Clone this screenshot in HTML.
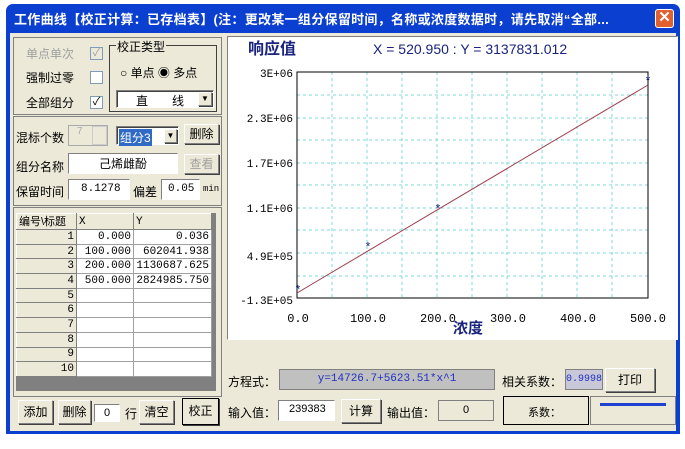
<!DOCTYPE html>
<html><head><meta charset="utf-8"><style>
*{box-sizing:border-box;margin:0;padding:0}
body{width:685px;height:449px;background:#fff;position:relative;overflow:hidden;font-family:"Liberation Sans","Noto Sans CJK SC",sans-serif;font-size:12px;color:#000}
.a{position:absolute}
.win{left:6px;top:4px;width:674px;height:430px;background:#0a3fd0;border-radius:7px 7px 0 0}
.body{left:10px;top:33px;width:666px;height:398px;background:#ece9d8}
.title{left:14px;top:9px;color:#fff;font-weight:bold;font-size:13px;white-space:nowrap;letter-spacing:0.3px}
.btn{background:#ece9d8;border:1px solid;border-color:#fff #808080 #808080 #fff;box-shadow:1px 1px 0 #404040;text-align:center;font-size:12px}
.sunk{background:#fff;border:1px solid;border-color:#808080 #fff #fff #808080;box-shadow:inset 1px 1px 0 #404040}
.chk{width:13px;height:13px;background:#fff;border:1px solid #7f9db9;font-size:11px;line-height:11px;text-align:center}
.lbl{white-space:nowrap}
table{border-collapse:collapse;font-family:"Liberation Mono",monospace;font-size:11px;table-layout:fixed}
td{border:1px solid #a0a0a0;height:14.7px;line-height:12px;padding:0 2px;text-align:right;background:#fff;overflow:hidden;white-space:nowrap}
td.h{background:#ece9d8;border-color:#fff #808080 #808080 #fff}
</style></head><body>
<div class="a win"></div>
<div class="a title">工作曲线【校正计算：已存档表】(注：更改某一组分保留时间，名称或浓度数据时，请先取消“全部...</div>
<div class="a" style="left:655px;top:9px;width:19px;height:19px;background:#e0602f;border:1px solid #fff;border-radius:3px;color:#fff;font-weight:bold;text-align:center;line-height:16px;font-size:15px">✕</div>
<div class="a body"></div>

<div class="a" style="left:13px;top:37px;width:209px;height:78px;border:1px solid #808080"></div>
<div class="a lbl" style="left:26px;top:45px;color:#a0a0a0">单点单次</div>
<div class="a chk" style="left:90px;top:47px;background:#ece9d8;color:#a0a0a0">✓</div>
<div class="a lbl" style="left:26px;top:69px">强制过零</div>
<div class="a chk" style="left:90px;top:71px"></div>
<div class="a lbl" style="left:26px;top:94px">全部组分</div>
<div class="a chk" style="left:90px;top:96px">✓</div>
<div class="a" style="left:109px;top:45px;width:108px;height:67px;border:1px solid #404040"></div>
<div class="a lbl" style="left:116px;top:38px;background:#ece9d8;padding:0 1px">校正类型</div>
<div class="a lbl" style="left:120px;top:64px">○ 单点 ◉ 多点</div>
<div class="a sunk" style="left:116px;top:90px;width:98px;height:18px"></div>
<div class="a lbl" style="left:136px;top:92px">直　　线</div>
<div class="a btn" style="left:198px;top:92px;width:14px;height:14px;font-size:8px;line-height:12px">▼</div>

<div class="a" style="left:13px;top:116px;width:209px;height:90px;border:1px solid #808080"></div>
<div class="a lbl" style="left:16px;top:129px">混标个数</div>
<div class="a" style="left:68px;top:125px;width:40px;height:21px;border:1px solid #aaa;color:#aaa;padding-left:8px;font-size:10px">7</div>
<div class="a" style="left:92px;top:126px;width:15px;height:19px;border:1px solid #ccc"></div>
<div class="a sunk" style="left:116px;top:126px;width:63px;height:19px"></div>
<div class="a" style="left:119px;top:129px;background:#316ac5;color:#fff;padding:0 1px">组分3</div>
<div class="a btn" style="left:164px;top:129px;width:13px;height:14px;font-size:8px;line-height:12px">▼</div>
<div class="a btn" style="left:184px;top:124px;width:35px;height:20px;line-height:18px">删除</div>
<div class="a lbl" style="left:16px;top:158px">组分名称</div>
<div class="a sunk" style="left:68px;top:153px;width:110px;height:21px;box-shadow:none"></div>
<div class="a lbl" style="left:99px;top:155px">己烯雌酚</div>
<div class="a btn" style="left:184px;top:154px;width:35px;height:20px;line-height:18px;color:#a0a0a0">查看</div>
<div class="a lbl" style="left:16px;top:183px">保留时间</div>
<div class="a sunk" style="left:68px;top:179px;width:62px;height:21px;box-shadow:none;font-family:'Liberation Mono',monospace;font-size:11px;padding:3px 0 0 12px">8.1278</div>
<div class="a lbl" style="left:133px;top:183px">偏差</div>
<div class="a sunk" style="left:161px;top:179px;width:39px;height:21px;box-shadow:none;font-family:'Liberation Mono',monospace;font-size:11px;padding:3px 0 0 6px">0.05</div>
<div class="a" style="left:203px;top:184px;font-family:'Liberation Mono',monospace;font-size:9px">min</div>

<div class="a" style="left:13px;top:207px;width:209px;height:190px;border:1px solid #808080"></div>
<div class="a" style="left:16px;top:213px;width:200px;height:178px;background:#808080"></div>
<div class="a" style="left:16px;top:213px">
<table style="width:196px">
<tr><td class="h" style="width:60px;text-align:left;font-family:'Liberation Sans','Noto Sans CJK SC',sans-serif;font-size:11px;height:16px">编号\标题</td><td class="h" style="width:57px;text-align:left">X</td><td class="h" style="text-align:left">Y</td></tr>
<tr><td class="h">1</td><td>0.000</td><td>0.036</td></tr>
<tr><td class="h">2</td><td>100.000</td><td>602041.938</td></tr>
<tr><td class="h">3</td><td>200.000</td><td>1130687.625</td></tr>
<tr><td class="h">4</td><td>500.000</td><td>2824985.750</td></tr>
<tr><td class="h">5</td><td></td><td></td></tr>
<tr><td class="h">6</td><td></td><td></td></tr>
<tr><td class="h">7</td><td></td><td></td></tr>
<tr><td class="h">8</td><td></td><td></td></tr>
<tr><td class="h">9</td><td></td><td></td></tr>
<tr><td class="h">10</td><td></td><td></td></tr>
</table></div>
<div class="a btn" style="left:18px;top:400px;width:35px;height:24px;line-height:22px">添加</div>
<div class="a btn" style="left:58px;top:400px;width:33px;height:24px;line-height:22px">删除</div>
<div class="a sunk" style="left:94px;top:404px;width:26px;height:18px;box-shadow:none;font-size:11px;text-align:center;line-height:16px">0</div>
<div class="a lbl" style="left:125px;top:405px">行</div>
<div class="a btn" style="left:139px;top:400px;width:35px;height:24px;line-height:22px">清空</div>
<div class="a btn" style="left:182px;top:398px;width:37px;height:27px;line-height:25px;border:1px solid #000">校正</div>

<div class="a" style="left:227px;top:36px;width:451px;height:304px;background:#fff;border:1px solid #808080;border-right-color:#fff;border-bottom-color:#fff"></div>
<svg class="a" style="left:228px;top:37px" width="449" height="302">
<g font-family="Liberation Sans, Noto Sans CJK SC, sans-serif">
<text x="20" y="17" font-size="16" font-weight="bold" fill="#1a237e">响应值</text>
<text x="145" y="17" font-size="14" fill="#1a237e">X = 520.950 : Y = 3137831.012</text>
<text x="225" y="296" font-size="15" font-weight="bold" fill="#1a237e">浓度</text>
</g>
<g stroke="#7fd8d8" stroke-dasharray="3,3" stroke-width="1">
<line x1="104" y1="35" x2="104" y2="261"/><line x1="139" y1="35" x2="139" y2="261"/><line x1="174" y1="35" x2="174" y2="261"/><line x1="209" y1="35" x2="209" y2="261"/><line x1="244" y1="35" x2="244" y2="261"/><line x1="279" y1="35" x2="279" y2="261"/><line x1="314" y1="35" x2="314" y2="261"/><line x1="349" y1="35" x2="349" y2="261"/><line x1="384" y1="35" x2="384" y2="261"/>
<line x1="69" y1="58" x2="420" y2="58"/><line x1="69" y1="81" x2="420" y2="81"/><line x1="69" y1="103" x2="420" y2="103"/><line x1="69" y1="126" x2="420" y2="126"/><line x1="69" y1="148" x2="420" y2="148"/><line x1="69" y1="171" x2="420" y2="171"/><line x1="69" y1="193" x2="420" y2="193"/><line x1="69" y1="216" x2="420" y2="216"/><line x1="69" y1="239" x2="420" y2="239"/>
</g>
<rect x="69" y="35" width="351" height="226" fill="none" stroke="#000"/>
<line x1="69" y1="256" x2="420" y2="48" stroke="#a04050" stroke-width="1"/>
<g font-family="Liberation Mono, monospace" font-size="12" fill="#1a237e" text-anchor="middle">
<text x="70" y="257">*</text><text x="140" y="214">*</text><text x="210" y="176">*</text><text x="420" y="48">*</text>
</g>
<g font-family="Liberation Mono, monospace" font-size="11" fill="#000" text-anchor="end">
<text x="65" y="40">3E+06</text><text x="65" y="85">2.3E+06</text><text x="65" y="130">1.7E+06</text><text x="65" y="175">1.1E+06</text><text x="65" y="223">4.9E+05</text><text x="65" y="267">-1.3E+05</text>
</g>
<g font-family="Liberation Mono, monospace" font-size="12" fill="#000" text-anchor="middle">
<text x="70" y="285">0.0</text><text x="140" y="285">100.0</text><text x="210" y="285">200.0</text><text x="280" y="285">300.0</text><text x="350" y="285">400.0</text><text x="420" y="285">500.0</text>
</g>
</svg>

<div class="a lbl" style="left:228px;top:373px">方程式：</div>
<div class="a" style="left:279px;top:369px;width:216px;height:21px;background:#c0c0c0;border:1px solid #808080;color:#2030c0;font-family:'Liberation Mono',monospace;font-size:11px;text-align:center;line-height:19px">y=14726.7+5623.51*x^1</div>
<div class="a lbl" style="left:502px;top:373px">相关系数：</div>
<div class="a" style="left:565px;top:369px;width:38px;height:21px;background:#c8c8d8;border:1px solid #808080;color:#2030c0;font-family:'Liberation Mono',monospace;font-size:10px;line-height:19px;overflow:hidden">0.999896</div>
<div class="a btn" style="left:605px;top:368px;width:50px;height:24px;line-height:22px">打印</div>
<div class="a lbl" style="left:228px;top:404px">输入值：</div>
<div class="a sunk" style="left:278px;top:400px;width:57px;height:21px;box-shadow:none;font-size:11px;padding:2px 0 0 10px">239383</div>
<div class="a btn" style="left:341px;top:399px;width:40px;height:24px;line-height:22px">计算</div>
<div class="a lbl" style="left:387px;top:404px">输出值：</div>
<div class="a" style="left:438px;top:400px;width:56px;height:21px;border:1px solid #808080;font-size:11px;text-align:center;line-height:19px">0</div>
<div class="a" style="left:503px;top:396px;width:86px;height:29px;border:1px solid #000;background:#ece9d8"></div>
<div class="a lbl" style="left:528px;top:404px;font-size:11px">系数：</div>
<div class="a" style="left:590px;top:396px;width:86px;height:29px;border:1px solid #808080;background:#ece9d8"></div>
<div class="a" style="left:600px;top:403px;width:66px;height:3px;background:#2040d0"></div>
</body></html>
